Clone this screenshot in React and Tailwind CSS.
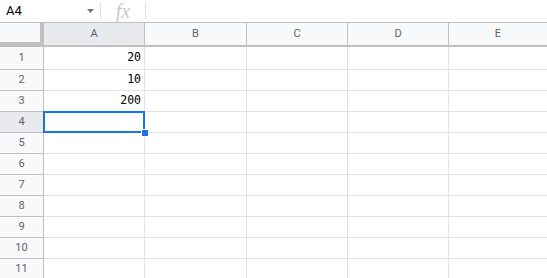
const cols = [
  { label: "A", w: "w-[101px]", sel: true },
  { label: "B", w: "w-[102px]" },
  { label: "C", w: "w-[101px]" },
  { label: "D", w: "w-[101px]" },
  { label: "E", w: "flex-1" },
];

const data = { 1: "20", 2: "10", 3: "200" };
const rows = [1, 2, 3, 4, 5, 6, 7, 8, 9, 10, 11];

const Row = ({ n }) => {
  const active = n === 4;
  return (
    <div
      className={`flex border-b border-[#e2e3e3] ${
        n === 1 ? "h-[23px]" : "h-[21px]"
      }`}
    >
      <div
        className={`w-[44px] shrink-0 border-r border-[#c0c0c0] -mb-px border-b flex items-center justify-center text-[11px] text-[#5f6368] ${
          active ? "bg-[#e8eaed]" : "bg-[#f8f9fa]"
        }`}
      >
        {n}
      </div>
      {cols.map((c, i) => (
        <div
          key={c.label}
          className={`${c.w} shrink-0 relative ${
            i < cols.length - 1 ? "border-r border-[#e2e3e3]" : ""
          } flex items-center justify-end pr-[3px] text-[11.5px] text-black [font-family:'DejaVu_Sans_Mono',monospace]`}
        >
          {i === 0 && data[n]}
          {i === 0 && active && (
            <>
              <div className="absolute z-10 -left-px -top-px -right-px -bottom-px border-2 border-[#1a73e8]" />
              <div className="absolute z-20 -right-[5px] -bottom-[5px] w-[8px] h-[8px] bg-[#1a73e8] border border-white" />
            </>
          )}
        </div>
      ))}
    </div>
  );
};

export default function App() {
  return (
    <div className="w-[547px] h-[278px] overflow-hidden bg-white [font-family:Roboto,'Liberation_Sans',sans-serif]">
      {/* formula bar */}
      <div className="flex items-center h-[22px]">
        <div className="w-[100px] flex items-center justify-between pl-[6px] pr-[6px] text-[13px] text-black">
          <span>A4</span>
          <svg width="7" height="4" viewBox="0 0 7 4">
            <path d="M0 0h7L3.5 4z" fill="#757575" />
          </svg>
        </div>
        <div className="w-px h-[18px] bg-[#e0e0e0]" />
        <div className="w-[44px] flex justify-center text-[20px] italic text-[#cacaca] leading-none [font-family:'Liberation_Serif',serif]">
          fx
        </div>
        <div className="w-px h-[18px] bg-[#e0e0e0]" />
      </div>

      {/* column headers */}
      <div className="flex h-[25px] border-t border-[#c0c0c0]">
        <div className="w-[44px] shrink-0 bg-[#f8f9fa] border-r-4 border-b-[5px] border-[#c0c0c0]" />
        {cols.map((c, i) => (
          <div
            key={c.label}
            className={`${c.w} shrink-0 flex items-center justify-center text-[11px] text-[#5f6368] border-b-2 border-[#c0c0c0] ${
              i < cols.length - 1 ? "border-r" : ""
            } ${c.sel ? "bg-[#e8eaed]" : "bg-[#f8f9fa]"}`}
          >
            {c.label}
          </div>
        ))}
      </div>

      {rows.map((n) => (
        <Row key={n} n={n} />
      ))}
    </div>
  );
}
